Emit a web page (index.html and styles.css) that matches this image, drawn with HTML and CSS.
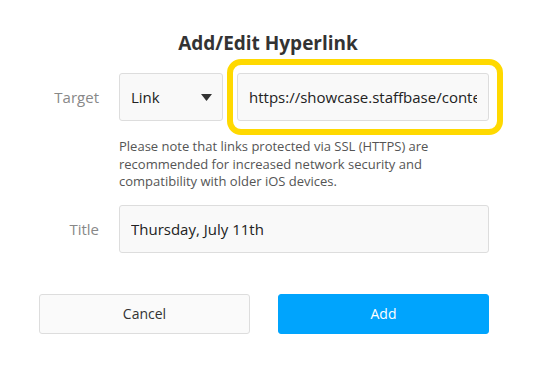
FILE: index.html
```html
<!DOCTYPE html>
<html lang="en">
<head>
    <meta charset="UTF-8">
    <title>Add/Edit Hyperlink</title>
    <link rel="stylesheet" href="styles.css">
</head>
<body>
    <div class="dialog">
        <h1 class="dialog-title">Add/Edit Hyperlink</h1>

        <div class="row">
            <label class="row-label" for="target">Target</label>
            <div class="row-field target-field">
                <div class="select">
                    <span>Link</span>
                    <svg class="caret" width="11" height="7" viewBox="0 0 11 7"><path d="M0 0h11L5.5 7z" fill="#333"/></svg>
                </div>
                <input id="target" class="input" type="text" value="https://showcase.staffbase/content/news/article/5d2707c9" readonly>
                <div class="highlight"></div>
            </div>
        </div>

        <p class="hint">Please note that links protected via SSL (HTTPS) are recommended for increased network security and compatibility with older iOS devices.</p>

        <div class="row">
            <label class="row-label" for="title">Title</label>
            <div class="row-field">
                <input id="title" class="input" type="text" value="Thursday, July 11th" readonly>
            </div>
        </div>

        <div class="actions">
            <button class="btn btn-cancel">Cancel</button>
            <button class="btn btn-add">Add</button>
        </div>
    </div>
</body>
</html>
```

FILE: styles.css
```css
body {
    margin: 0;
    background: #fff;
    font-family: "Open Sans", sans-serif;
    color: #222;
}

.dialog {
    width: 450px;
    padding: 26px 0 0 39px;
}

.dialog-title {
    margin: 0 0 12px -39px;
    width: 536px;
    text-align: center;
    font-size: 19px;
    font-weight: 700;
    line-height: 35px;
    color: #333;
}

.row {
    display: flex;
    align-items: center;
}

.row-label {
    flex: none;
    width: 60px;
    margin-right: 20px;
    text-align: right;
    font-size: 15px;
    color: #888;
}

.row-field {
    flex: 1;
    min-width: 0;
    display: flex;
}

.target-field {
    position: relative;
    gap: 14px;
}

.select {
    flex: none;
    width: 104px;
    height: 48px;
    box-sizing: border-box;
    display: flex;
    align-items: center;
    justify-content: space-between;
    padding: 0 10px 0 11px;
    background: #f9f9f9;
    border: 1px solid #ddd;
    border-radius: 3px;
    font-size: 15px;
}

.input {
    flex: 1;
    min-width: 0;
    height: 48px;
    box-sizing: border-box;
    margin: 0;
    padding: 0 11px;
    background: #f9f9f9;
    border: 1px solid #ddd;
    border-radius: 3px;
    font-family: "Open Sans", sans-serif;
    font-size: 15px;
    color: #222;
    outline: none;
}

.highlight {
    position: absolute;
    left: 108px;
    top: -14px;
    width: 276px;
    height: 76px;
    box-sizing: border-box;
    border: 6px solid #ffd900;
    border-radius: 14px;
    pointer-events: none;
}

.hint {
    margin: 17px 0 14px 80px;
    width: 360px;
    font-size: 13px;
    line-height: 17.5px;
    color: #555;
}

.actions {
    display: flex;
    gap: 28px;
    margin-top: 41px;
}

.btn {
    flex: 1;
    height: 40px;
    border-radius: 3px;
    font-family: "Open Sans", sans-serif;
    font-size: 14px;
}

.btn-cancel {
    background: #fafafa;
    border: 1px solid #ddd;
    color: #333;
}

.btn-add {
    background: #00a4fd;
    border: 1px solid #00a4fd;
    color: #fff;
}
```
